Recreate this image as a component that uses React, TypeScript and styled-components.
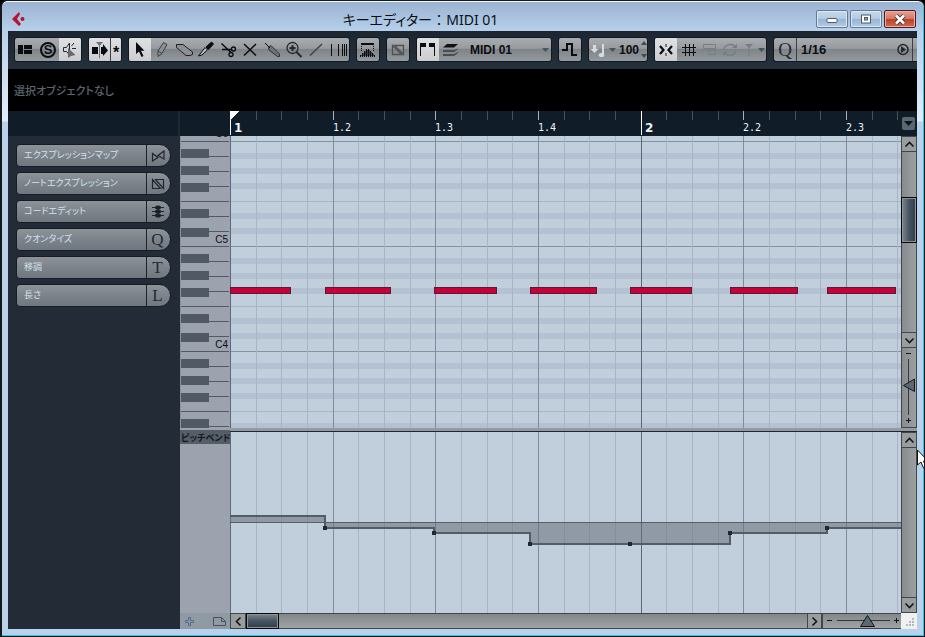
import React, { useEffect, useRef, useState } from 'react';
import styled, { createGlobalStyle, css } from 'styled-components';

const GlobalStyle = createGlobalStyle`
  * { box-sizing: border-box; }
  body { margin: 0; background: #000; font-family: "Liberation Sans", "Noto Sans CJK JP", sans-serif; }
  button, select, input { font: inherit; color: inherit; margin: 0; padding: 0; border: 0; background: none; border-radius: 0; }
  svg { display: block; flex: none; }
`;

/* ---------- window frame ---------- */

const Frame = styled.main`
  position: relative;
  display: flex;
  flex-direction: column;
  height: 100vh;
  min-height: 480px;
  overflow: hidden;
  padding: 0 7px 7px 6px;
  border: 1px solid #15181c;
  border-left-width: 2px;
  border-radius: 7px 7px 0 0;
  box-shadow: inset 0 1px 0 #f3f8fd, inset -1px -1px 0 #35c3e4;
  background: linear-gradient(#98b2d0 0, #b8d1ec 31px, #e3edf8 120px, #b9d1eb 121px);
`;

const TitleBar = styled.header`
  display: flex;
  flex: none;
  height: 30px;
`;

const AppLogo = styled.div`
  padding: 10px 0 0 3px;
`;

const Title = styled.h1`
  flex: 1;
  margin: 0;
  padding-top: 8px;
  text-align: center;
  font: 400 14px/22px "Noto Sans", "Noto Sans CJK JP", sans-serif;
  font-feature-settings: "palt";
  white-space: pre;
  color: #0b0f14;
`;

const WindowButtons = styled.div`
  display: flex;
  gap: 2px;
  padding: 9px 1px 0 0;
`;

const WindowButton = styled.button<{ $close?: boolean }>`
  display: grid;
  place-items: center;
  width: 32px;
  height: 18px;
  border: 1px solid ${p => (p.$close ? '#54191c' : '#63799a')};
  border-radius: 2px;
  box-shadow: inset 0 0 0 1px ${p => (p.$close ? '#e8b0a6' : '#dbe7f4')};
  background: ${p =>
    p.$close
      ? 'linear-gradient(#e5a193 0, #d47866 48%, #b8402b 50%, #cf6a4c 100%)'
      : 'linear-gradient(#c7d9ec 0, #b3cae2 48%, #98b3d0 50%, #b3cde6 100%)'};
`;

const Client = styled.div`
  display: flex;
  flex-direction: column;
  flex: 1;
  min-height: 0;
  background: #202a34;
`;

/* ---------- toolbar ---------- */

const Toolbar = styled.div`
  display: flex;
  gap: 6px;
  flex: none;
  height: 38px;
  padding: 6px 0 0 6px;
  overflow: hidden;
  background: linear-gradient(#1d2630, #24303b);
`;

const Group = styled.div<{ $w?: number }>`
  display: flex;
  align-items: stretch;
  height: 25px;
  border: 1px solid #11181f;
  border-radius: 3px;
  overflow: hidden;
  color: #0a0d10;
  background: linear-gradient(#a9adb1 0, #979b9f 45%, #7f8489 50%, #94999d 100%);
  ${p => (p.$w ? css`flex: none; width: ${p.$w}px;` : css`flex: 1; border-right: 0; border-radius: 3px 0 0 3px;`)}
`;

const Tool = styled.button<{ $lit?: boolean; $w?: number; $dim?: boolean }>`
  display: grid;
  place-items: center;
  flex: none;
  width: ${p => p.$w ?? 22}px;
  color: ${p => (p.$dim ? '#777d83' : '#0a0d10')};
  ${p => p.$lit && css`background: linear-gradient(#dfe0e2, #cccdd0);`}
`;

const StarTool = styled(Tool)`
  border-left: 1px solid #3a3f45;
  font: 700 16px/16px "Liberation Sans", sans-serif;
  padding-top: 6px;
`;

const SoloRing = styled.span`
  display: grid;
  place-items: center;
  width: 16px;
  height: 16px;
  border: 2px solid #0a0d10;
  border-radius: 50%;
  font: 700 13px/12px "Liberation Sans", sans-serif;
`;

const Select = styled.select`
  appearance: none;
  flex: 1;
  min-width: 0;
  padding-left: 9px;
  font: 700 12px/22px "Liberation Sans", sans-serif;
  outline: 0;
`;

const PresetSelect = styled(Select)`
  padding-left: 4px;
  border-left: 1px solid #3a3f45;
  font-size: 13px;
`;

const Velocity = styled.input`
  width: 24px;
  font: 700 12px/22px "Liberation Sans", sans-serif;
  text-align: center;
`;

const Spinner = styled.span`
  display: grid;
  align-content: space-between;
  padding: 3px 0;
`;

const QuantizeLetter = styled.span`
  font: 400 19px/21px "Liberation Serif", serif;
  color: #24292e;
`;

const Edge = styled.span`
  flex: none;
  width: 5px;
  border-left: 1px solid #3a3f45;
`;

const InfoLine = styled.p`
  flex: none;
  height: 42px;
  margin: 0;
  padding-left: 6px;
  font: 500 11px/42px "Noto Sans CJK JP", sans-serif;
  font-feature-settings: "palt";
  color: #5b6570;
  background: #000;
`;

/* ---------- editor ---------- */

const Editor = styled.div`
  display: grid;
  grid-template-columns: 172px 50px minmax(0, 1fr) 16px;
  grid-template-rows: 25px minmax(0, 1fr) 4px 181px 16px;
  flex: 1;
  min-height: 0;
`;

const RulerBlank = styled.div<{ $gap?: boolean }>`
  background: #101c28;
  margin-right: ${p => (p.$gap ? 2 : 0)}px;
`;

const RulerStrip = styled.div`
  position: relative;
  overflow: hidden;
  background: #101c28;
`;

const RulerLabel = styled.span<{ $x: number; $bar?: boolean }>`
  position: absolute;
  left: ${p => p.$x}px;
  bottom: ${p => (p.$bar ? 1 : 2)}px;
  font: ${p => (p.$bar ? '700 12px/14px "DejaVu Sans"' : '400 10px/12px "DejaVu Sans Mono"')}, sans-serif;
  color: #eef3f6;
`;

const RulerMenu = styled.div`
  background: #101c28;
  padding: 6px 2px 0 1px;
`;

const RulerMenuButton = styled.button`
  display: grid;
  place-items: center;
  width: 13px;
  height: 13px;
  border-radius: 2px;
  background: #5a6670;
  color: #0c141c;
`;

const Inspector = styled.nav`
  grid-row: 2 / 6;
  display: flex;
  flex-direction: column;
  gap: 5px;
  padding: 8px;
  background: #232b36;
`;

const Section = styled.button`
  display: flex;
  flex: none;
  width: 155px;
  height: 23px;
  border: 1px solid #161c24;
  border-radius: 4px 12px 12px 4px;
  overflow: hidden;
  text-align: left;
  background: linear-gradient(#8d9399 0, #7d838a 50%, #71777e 100%);
`;

const SectionName = styled.span`
  flex: 1;
  padding-left: 7px;
  font: 400 9px/20px "Noto Sans CJK JP", sans-serif;
  font-feature-settings: "palt";
  white-space: nowrap;
  color: #d2e2ee;
`;

const SectionMark = styled.span`
  display: grid;
  place-items: center;
  width: 24px;
  padding-right: 2px;
  border-left: 1px solid #1c2229;
  font: 400 17px/20px "Liberation Serif", serif;
  color: #24292e;
`;

const Keys = styled.div`
  position: relative;
  overflow: hidden;
  background: #9ca2ae;
`;

const KeyName = styled.span<{ $y: number }>`
  position: absolute;
  right: 2px;
  top: ${p => p.$y}px;
  font: 400 10px/12px "Liberation Sans", sans-serif;
  color: #0a0d10;
`;

const Canvas = styled.div`
  position: relative;
  overflow: hidden;
  background: #c1cedc;
`;

const Note = styled.div<{ $x: number; $w: number }>`
  position: absolute;
  top: 151px;
  left: ${p => p.$x}px;
  width: ${p => p.$w}px;
  height: 7px;
  border: 1px solid #5e1a34;
  background: #c60038;
`;

const Divider = styled.div`
  grid-column: 3 / 5;
  border-bottom: 1px solid #23272d;
  background: #929aa3;
`;

const LaneHeader = styled.div`
  grid-column: 2;
  grid-row: 3 / 5;
  padding-top: 2px;
  background: #9ca2ae;
  overflow: hidden;
`;

const LaneName = styled.button`
  display: block;
  width: 100%;
  height: 14px;
  overflow: hidden;
  padding-left: 1px;
  text-align: left;
  font: 700 9px/13px "Noto Sans CJK JP", sans-serif;
  font-feature-settings: "palt";
  white-space: nowrap;
  color: #15191d;
  background: #555d67;
`;

const LaneTools = styled.div`
  display: flex;
  justify-content: space-between;
  padding: 1px 4px 0;
  background: #909aa3;
  color: #506c8c;
`;

/* ---------- scroll bars ---------- */

const VColumn = styled.div`
  display: flex;
  flex-direction: column;
  min-height: 0;
  border: 1px solid #41464a;
  border-width: 0 1px 0 1px;
  background: linear-gradient(90deg, #878b8e, #9da0a1);
`;

const HBar = styled.div`
  display: flex;
  min-width: 0;
  border: 1px solid #41464a;
  border-right: 0;
  background: linear-gradient(#84888a, #a0a3a4);
`;

const Arrow = styled.button<{ $v?: boolean; $end?: boolean }>`
  display: grid;
  place-items: center;
  flex: none;
  width: ${p => (p.$v ? 'auto' : '15px')};
  height: ${p => (p.$v ? '16px' : 'auto')};
  color: #12161a;
  background: #999d9f;
  border: 0 solid #41464a;
  ${p => (p.$v ? css`border-top-width: 1px; border-bottom-width: 1px;` : css`border-right-width: 1px; border-left-width: ${p.$end ? 1 : 0}px;`)}
`;

const Track = styled.div<{ $v?: boolean }>`
  display: flex;
  flex-direction: ${p => (p.$v ? 'column' : 'row')};
  flex: 1;
  min-height: 0;
  padding-top: ${p => (p.$v ? '45px' : 0)};
`;

const Thumb = styled.div<{ $v?: boolean }>`
  ${p => (p.$v ? css`height: 46px; margin: 0 -1px;` : css`width: 33px; margin: -1px 0;`)}
  flex: none;
  border: 1px solid #050709;
  box-shadow: inset 0 0 0 1px #8b939a;
  background: linear-gradient(${p => (p.$v ? '90deg' : '180deg')}, #7a8590, #465461 50%, #303d48);
`;

const Zoom = styled.label<{ $v?: boolean }>`
  position: relative;
  display: block;
  flex: none;
  ${p => (p.$v ? css`height: 80px; border-bottom: 1px solid #41464a;` : css`width: 79px; border-left: 1px solid #41464a;`)}
`;

const ZoomInput = styled.input`
  position: absolute;
  inset: 0;
  width: 100%;
  height: 100%;
  opacity: 0;
`;

const Corner = styled.div`
  display: grid;
  place-items: end;
  padding: 2px;
  background: #f0f0f0;
`;

const Pointer = styled.div`
  position: absolute;
  top: 448px;
  right: -6px;
`;

/* ---------- drawings ---------- */

const Svg = ({ w = 22, h = 23, crisp, children }: { w?: number; h?: number; crisp?: boolean; children: React.ReactNode }) => (
  <svg width={w} height={h} viewBox={`0 0 ${w} ${h}`} fill="none" stroke="currentColor" shapeRendering={crisp ? 'crispEdges' : undefined} aria-hidden="true">
    {children}
  </svg>
);

const Down = () => (
  <Svg w={7} h={4}><path d="M0 0H7L3.5 4Z" fill="#46565e" stroke="none" /></Svg>
);

const Chevron = ({ d }: { d: string }) => <Svg w={11} h={11}><path d={d} strokeWidth="1.6" /></Svg>;

const arrows = {
  up: 'M1.5 7.5L5.5 3.5L9.5 7.5',
  down: 'M1.5 3.5L5.5 7.5L9.5 3.5',
  left: 'M7.5 1.5L3.5 5.5L7.5 9.5',
  right: 'M3.5 1.5L7.5 5.5L3.5 9.5',
};

const editTools: { name: string; icon: React.ReactNode; lit?: boolean }[] = [
  { name: '選択', lit: true, icon: <path d="M7 4V16L10 13.5L12.5 19L14.5 18L12 12.8H15.5Z" fill="currentColor" stroke="none" /> },
  { name: '鉛筆', icon: <path d="M7 13L12.5 4.5L16 6.5L11 15.5L7 18.5ZM7 13L11 15.5" stroke="#3a4045" fill="#8b9095" /> },
  { name: '消しゴム', icon: <path d="M3.5 6.5H10L19.5 14V16.5L17 17.5H13L3.5 9.5Z" stroke="#1c2024" fill="#8b9095" /> },
  { name: 'トリム', icon: <><path d="M3.5 18L10 9.5L12.5 12L7 17Z" fill="#b5b9bd" /><path d="M11 9L16.5 4L18.5 6L13.5 11.5Z" fill="currentColor" /></> },
  { name: '分割', icon: <><path d="M4.500 5.500L14.500 15M5 11.500H14.500" strokeWidth="1.5" /><circle cx="16.500" cy="11" r="2" strokeWidth="1.3" /><circle cx="14" cy="16.500" r="2" strokeWidth="1.3" /></> },
  { name: 'ミュート', icon: <path d="M5 6L17 17.5M17 6L5 17.5" strokeWidth="1.5" /> },
  { name: 'のり', icon: <><path d="M7.5 9.500L10 7.500L18.5 16V18.500H16.5L8 12Z" fill="#6d7378" stroke="#2c3236" /><path d="M4 5L9 10" /></> },
  { name: 'ズーム', icon: <><circle cx="9.5" cy="10" r="5.5" stroke="#23282c" strokeWidth="1.3" /><path d="M6.5 10H12.5M9.5 7V13M13.5 14L18.5 19" strokeWidth="2" stroke="#23282c" /></> },
  { name: 'ライン', icon: <path d="M5 17.5L17 6" stroke="#3e4449" strokeWidth="1.5" /> },
  { name: 'タイムワープ', icon: <path d="M4.5 6V18M11.5 6V18M15.5 6V18M17.5 6V18M19.5 6V18" /> },
];

const sections: { name: string; mark: React.ReactNode }[] = [
  { name: 'エクスプレッションマップ', mark: <Svg w={14} h={12}><path d="M1.5 3.500V11L7 7.5ZM13 1V9L7 5.5Z" stroke="#20262b" strokeWidth="1.2" /></Svg> },
  { name: 'ノートエクスプレッション', mark: <Svg w={14} h={12}><path d="M1.500 1.500V10.500H9.500ZM4.500 1.500H12.5V10.500Z" stroke="#20262b" strokeWidth="1.2" /></Svg> },
  {
    name: 'コードエディット',
    mark: <Svg w={12} h={13}><path d="M0 2.5H12M0 6.5H12M0 10.5H12M6 1V12" stroke="#24292e" /><g fill="#1c2125" stroke="none"><ellipse cx="6" cy="2.5" rx="3" ry="2" /><ellipse cx="6" cy="6.5" rx="3" ry="2" /><ellipse cx="6" cy="10.5" rx="3" ry="2" /></g></Svg>,
  },
  { name: 'クオンタイズ', mark: 'Q' },
  { name: '移調', mark: 'T' },
  { name: '長さ', mark: 'L' },
];

/* Horizontal positions of the sixteenth steps; every fourth is a beat, every sixteenth a bar. */
const steps = Array.from({ length: 96 }, (_, i) => Math.round(i * 25.66));
const beatLabels = steps
  .map((x, i) => ({ x, i }))
  .filter(({ i }) => i % 4 === 0)
  .map(({ x, i }) => {
    const bar = Math.floor(i / 16) + 1;
    const beat = (i % 16) / 4 + 1;
    return { x, bar: beat === 1, text: beat === 1 ? `${bar}` : `${bar}.${beat}` };
  });

const notes = [[0, 61], [95, 66], [204, 63], [300, 67], [400, 62], [500, 68], [597, 69]];
const bends = [[95, 95], [204, 100], [300, 111], [400, 111], [500, 100], [597, 95]];
const octaves = [-100, 5, 110, 215, 320, 425, 530];

const stepColor = (i: number) => (i % 16 === 0 ? '#566a7b' : i % 4 === 0 ? '#7e8d9c' : '#a8b6c4');

const GridLines = () => (
  <g stroke="none">
    {steps.map((x, i) => <rect key={x} x={x} y="0" width="1" height="2000" fill={stepColor(i)} />)}
  </g>
);

const Drawing = ({ children }: { children: React.ReactNode }) => (
  <svg width="100%" height="100%" shapeRendering="crispEdges" aria-hidden="true">{children}</svg>
);

const bendLine = 'M0 84H95V96H204V101H300V112H500V101H597V96H4000';

/* Shows only the labels that fit whole into the current width. */
function Ruler() {
  const strip = useRef<HTMLDivElement>(null);
  const [width, setWidth] = useState(0);

  useEffect(() => {
    const node = strip.current;
    if (!node) return;
    const measure = () => setWidth(node.clientWidth);
    measure();
    const observer = new ResizeObserver(measure);
    observer.observe(node);
    return () => observer.disconnect();
  }, []);

  return (
    <RulerStrip ref={strip}>
      <Drawing>
        {steps.map((x, i) => (
          <rect key={x} x={x} y="0" width="1" height={i % 16 === 0 ? 24 : 9} fill={i % 16 === 0 ? '#fff' : i % 4 === 0 ? '#a9b2ba' : '#48535f'} />
        ))}
        <path d="M0 0H9L0 9Z" fill="#fff" />
      </Drawing>
      {beatLabels
        .filter(l => l.x + 24 < width)
        .map(l => <RulerLabel key={l.text} $x={l.x + (l.bar ? 4 : 0)} $bar={l.bar}>{l.text}</RulerLabel>)}
    </RulerStrip>
  );
}

export default function App() {
  return (
    <>
      <GlobalStyle />
      <Frame>
        <TitleBar>
          <AppLogo>
            <Svg w={14} h={16}>
              <path d="M8 1L1 8L8 15L10 13L6 8L9 3Z" fill="#b51430" stroke="none" />
              <circle cx="11.500" cy="8" r="2" fill="#b51430" stroke="none" />
            </Svg>
          </AppLogo>
          <Title>キーエディター ： MIDI 01</Title>
          <WindowButtons>
            <WindowButton aria-label="最小化"><Svg w={12} h={8}><rect x="1" y="3.5" width="10" height="4" rx="1" fill="#fff" stroke="#4c586a" /></Svg></WindowButton>
            <WindowButton aria-label="最大化"><Svg w={12} h={10}><rect x="1.5" y="1" width="9" height="8" fill="#fff" stroke="#4c586a" /><rect x="4.5" y="3.5" width="3" height="2.5" fill="#8fabcc" stroke="#4c586a" /></Svg></WindowButton>
            <WindowButton $close aria-label="閉じる"><Svg w={14} h={11}><path d="M3 1.5L11 9.5M11 1.5L3 9.5" stroke="#4c3a44" strokeWidth="4.5" /><path d="M3 1.5L11 9.5M11 1.5L3 9.5" stroke="#fff" strokeWidth="2.5" /></Svg></WindowButton>
          </WindowButtons>
        </TitleBar>

        <Client>
          <Toolbar role="toolbar">
            <Group $w={68}>
              <Tool aria-label="レイアウト"><Svg><path d="M3 7H8V16H3ZM9 7H17V11H9ZM9 12H17V16H9Z" fill="currentColor" stroke="none" /></Svg></Tool>
              <Tool aria-label="ソロ"><SoloRing>S</SoloRing></Tool>
              <Tool $lit aria-label="音を鳴らす">
                <Svg><path d="M4.5 9.5H7.5L10.5 5V17L7.5 13.5H4.5ZM12.5 8L15 5M13 10.5H17" stroke="#24292d" /><path d="M9 10V20L12 18L16.5 17Z" fill="#666a6f" stroke="none" /></Svg>
              </Tool>
            </Group>
            <Group $w={34}>
              <Tool $lit $w={21} aria-label="オートスクロール">
                <Svg w={21}><path d="M3 9H9V16H3ZM12 9H14V6L19 12.5L14 18V16H12Z" fill="currentColor" stroke="none" /><path d="M7 4H14L10.5 8Z" fill="#6b7075" stroke="none" /><path d="M10.5 5V20" stroke="#6b7075" /></Svg>
              </Tool>
              <StarTool $lit $w={11} aria-label="自動選択">*</StarTool>
            </Group>
            <Group $w={222}>
              {editTools.map(t => <Tool key={t.name} $lit={t.lit} aria-label={t.name}><Svg>{t.icon}</Svg></Tool>)}
            </Group>
            <Group $w={24}>
              <Tool aria-label="ベロシティ表示">
                <Svg crisp>
                  <g fill="currentColor" stroke="none">
                    <rect x="4" y="5" width="13" height="2" />
                    {[[3, 17], [5, 15], [7, 13], [9, 11], [11, 11], [13, 13], [15, 15], [17, 17]].map(([x, y]) => <rect key={x} x={x} y={y} width="1" height={19 - y} />)}
                    <path d="M3 18L9 12H12L18 18Z" fillOpacity="0.55" />
                    {[8, 10, 12].map(y => <path key={y} d={`M4 ${y}h1v1h-1zM16 ${y}h1v1h-1z`} />)}
                  </g>
                </Svg>
              </Tool>
            </Group>
            <Group $w={24}>
              <Tool aria-label="ノートエクスプレッション"><Svg><path d="M5.5 7.5V16.5H14.5ZM7.5 7.5H16.5V16.5Z" stroke="#4b5156" strokeWidth="1.3" /></Svg></Tool>
            </Group>
            <Group $w={136}>
              <Tool $lit aria-label="パート境界"><Svg crisp><path d="M3 5H9V9H4V18H3ZM12 5H18V18H17V9H12Z" fill="currentColor" stroke="none" /></Svg></Tool>
              <Tool aria-label="パート編集"><Svg><path d="M8 6H19L15 9.5H4Z" fill="#111" stroke="none" /><path d="M4 12H15L19 10.500V11L15 14H4ZM4 16H15L19 14V15L15 18H4Z" fill="#474d52" stroke="none" /></Svg></Tool>
              <Select aria-label="編集パート"><option>MIDI 01</option></Select>
              <Tool $w={12} aria-label="パートを開く"><Down /></Tool>
            </Group>
            <Group $w={24}>
              <Tool aria-label="ステップ入力"><Svg><path d="M3 12H8V6H13V17H18" strokeWidth="2" /></Svg></Tool>
            </Group>
            <Group $w={60}>
              <Tool $w={18} aria-label="挿入ベロシティ"><Svg w={18}><path d="M4 7H7V11H9.5L5.5 15L1.5 11H4ZM13 6H15V17H13Z" fill="#d5dbe0" stroke="none" /><ellipse cx="12.5" cy="17" rx="2.8" ry="2" fill="#d5dbe0" stroke="none" /></Svg></Tool>
              <Tool $w={10} aria-label="ベロシティ一覧"><Down /></Tool>
              <Velocity aria-label="ベロシティ" defaultValue="100" />
              <Spinner>
                <Svg w={6} h={4}><path d="M0 4H6L3 0Z" fill="#3d494f" stroke="none" /></Svg>
                <Svg w={6} h={4}><path d="M0 0H6L3 4Z" fill="#3d494f" stroke="none" /></Svg>
              </Spinner>
            </Group>
            <Group $w={113}>
              <Tool $lit aria-label="スナップ"><Svg><path d="M5 8L8.5 12L5 16M17 8L13.5 12L17 16" strokeWidth="2.2" /><path d="M11 6V9M11 15V18" stroke="#777" strokeWidth="2" /></Svg></Tool>
              <Tool $w={24} aria-label="グリッド"><Svg><path d="M7.5 6V18M11.5 6V18M15.5 6V18M4 9.5H18M4 14.5H18" /></Svg></Tool>
              <Tool $dim $w={18} aria-label="グリッドタイプ"><Svg w={18}><path d="M2.5 6.5H14.5V10.5H2.5ZM7.5 12.5H14.5V16.5H7.5Z" /></Svg></Tool>
              <Tool $dim $w={22} aria-label="ループ"><Svg><path d="M5 11C6 6 14 5 16 9M17 13C16 18 8 19 6 15" strokeWidth="1.5" /><path d="M13 10H18V6ZM9 14H4V18Z" fill="currentColor" stroke="none" /></Svg></Tool>
              <Tool $dim $w={15} aria-label="ルート"><Svg w={15}><path d="M4 6H12L8 10Z" fill="currentColor" stroke="none" /><path d="M8 8V18" /></Svg></Tool>
              <Tool $w={10} aria-label="スナップ一覧"><Down /></Tool>
            </Group>
            <Group>
              <Tool aria-label="クオンタイズ適用"><QuantizeLetter>Q</QuantizeLetter></Tool>
              <PresetSelect aria-label="クオンタイズ"><option>1/16</option></PresetSelect>
              <Tool $w={18} aria-label="クオンタイズ設定"><Svg w={16}><circle cx="8" cy="11.5" r="5" stroke="#23282c" strokeWidth="1.5" /><path d="M6 8L11 11.5L6 15Z" fill="#23282c" stroke="none" /></Svg></Tool>
              <Edge />
            </Group>
          </Toolbar>

          <InfoLine>選択オブジェクトなし</InfoLine>

          <Editor>
            <RulerBlank $gap />
            <RulerBlank />
            <Ruler />
            <RulerMenu>
              <RulerMenuButton aria-label="ルーラー表示形式"><Svg w={9} h={5}><path d="M0 0H9L4.5 5Z" fill="currentColor" stroke="none" /></Svg></RulerMenuButton>
            </RulerMenu>

            <Inspector>
              {sections.map(s => (
                <Section key={s.name}>
                  <SectionName>{s.name}</SectionName>
                  <SectionMark>{s.mark}</SectionMark>
                </Section>
              ))}
            </Inspector>

            <Keys>
              <Drawing>
                {octaves.map(y => (
                  <g key={y} transform={`translate(0 ${y})`} fill="#515964">
                    {[0, 15, 30, 45, 60, 75, 90].map(k => <rect key={k} x="1" y={k} width="48" height="1" />)}
                    {[15, 30, 45, 75, 90].map(k => <rect key={k} x="1" y={k} width="28" height="1" fill="#9ca2ae" />)}
                    {[8, 25, 42, 68, 87].map(k => <rect key={k} x="1" y={k} width="28" height="9" />)}
                  </g>
                ))}
                <rect x="0" y="0" width="1" height="2000" fill="#8a929e" />
              </Drawing>
              <KeyName $y={-8}>C6</KeyName>
              <KeyName $y={98}>C5</KeyName>
              <KeyName $y={203}>C4</KeyName>
            </Keys>

            <Canvas>
              <Drawing>
                {octaves.map(y => (
                  <g key={y} transform={`translate(0 ${y})`}>
                    {[12, 27, 42, 72, 87].map(k => <rect key={k} x="0" y={k} width="4000" height="6" fill="#b4c1d2" />)}
                    <rect x="0" y="60" width="4000" height="1" fill="#a8b6c4" />
                    <rect x="0" y="0" width="4000" height="1" fill="#8293a2" />
                  </g>
                ))}
                <GridLines />
              </Drawing>
              {notes.map(([x, w]) => <Note key={x} $x={x} $w={w} />)}
            </Canvas>
            <VColumn>
              <Arrow $v aria-label="上へ"><Chevron d={arrows.up} /></Arrow>
              <Track $v><Thumb $v /></Track>
              <Arrow $v aria-label="下へ"><Chevron d={arrows.down} /></Arrow>
              <Zoom $v>
                <Svg w={14} h={79}>
                  <path d="M4 5.5H9M4 72.5H9M6.5 70V75" stroke="#12161a" />
                  <path d="M6.5 11V67" stroke="#33383d" />
                  <path d="M12.5 31V43.5L1.5 37.5Z" fill="#5b6772" stroke="#12161a" />
                </Svg>
                <ZoomInput type="range" aria-label="縦ズーム" />
              </Zoom>
            </VColumn>

            <LaneHeader><LaneName>ピッチベンド</LaneName></LaneHeader>
            <Divider />
            <Canvas>
              <Drawing>
                <GridLines />
                <path d="M0 84H95V96H204V101H300V112H500V101H597V96H4000V90H0Z" fill="#66707a" fillOpacity="0.55" />
                <rect x="0" y="90" width="4000" height="1" fill="#565e66" />
                <path d={bendLine} fill="none" stroke="#535b64" strokeWidth="2" />
                {bends.map(([x, y]) => <rect key={x} x={x - 2} y={y - 1} width="4" height="4" fill="#23282e" />)}
              </Drawing>
            </Canvas>
            <VColumn>
              <Arrow $v aria-label="上へ"><Chevron d={arrows.up} /></Arrow>
              <Track $v />
              <Arrow $v aria-label="下へ"><Chevron d={arrows.down} /></Arrow>
            </VColumn>

            <LaneTools>
              <button aria-label="レーンを追加"><Svg w={11} h={12}><path d="M4.5 1.5H6.5V4.5H9.5V6.5H6.5V9.5H4.5V6.5H1.5V4.5H4.5Z" /></Svg></button>
              <button aria-label="プリセット"><Svg w={13} h={12}><path d="M0.5 1.5H8.5L12.5 5.5V9.5H0.5ZM8.5 1.5V5.5H12.5" stroke="#46525f" /></Svg></button>
            </LaneTools>
            <HBar>
              <Arrow aria-label="左へ"><Chevron d={arrows.left} /></Arrow>
              <Track><Thumb /></Track>
              <Arrow $end aria-label="右へ"><Chevron d={arrows.right} /></Arrow>
              <Zoom>
                <Svg w={78} h={14}>
                  <path d="M4 6.5H9M71 6.5H76M73.5 4V9" stroke="#12161a" />
                  <path d="M14 6.5H67" stroke="#33383d" />
                  <path d="M37.5 12.5H51.5L44.5 1.5Z" fill="#5b6772" stroke="#12161a" />
                </Svg>
                <ZoomInput type="range" aria-label="横ズーム" />
              </Zoom>
            </HBar>
            <Corner>
              <Svg w={9} h={9}><path d="M0 6H2V8H0ZM3 6H5V8H3ZM6 6H8V8H6ZM3 3H5V5H3ZM6 3H8V5H6ZM6 0H8V2H6Z" fill="#b8b8b8" stroke="none" /></Svg>
            </Corner>
          </Editor>
        </Client>
        <Pointer>
          <Svg w={13} h={20}><path d="M0.5 1V16L4 13L6.5 19L9 18L6.5 12H11Z" fill="#fff" stroke="#111" /></Svg>
        </Pointer>
      </Frame>
    </>
  );
}
